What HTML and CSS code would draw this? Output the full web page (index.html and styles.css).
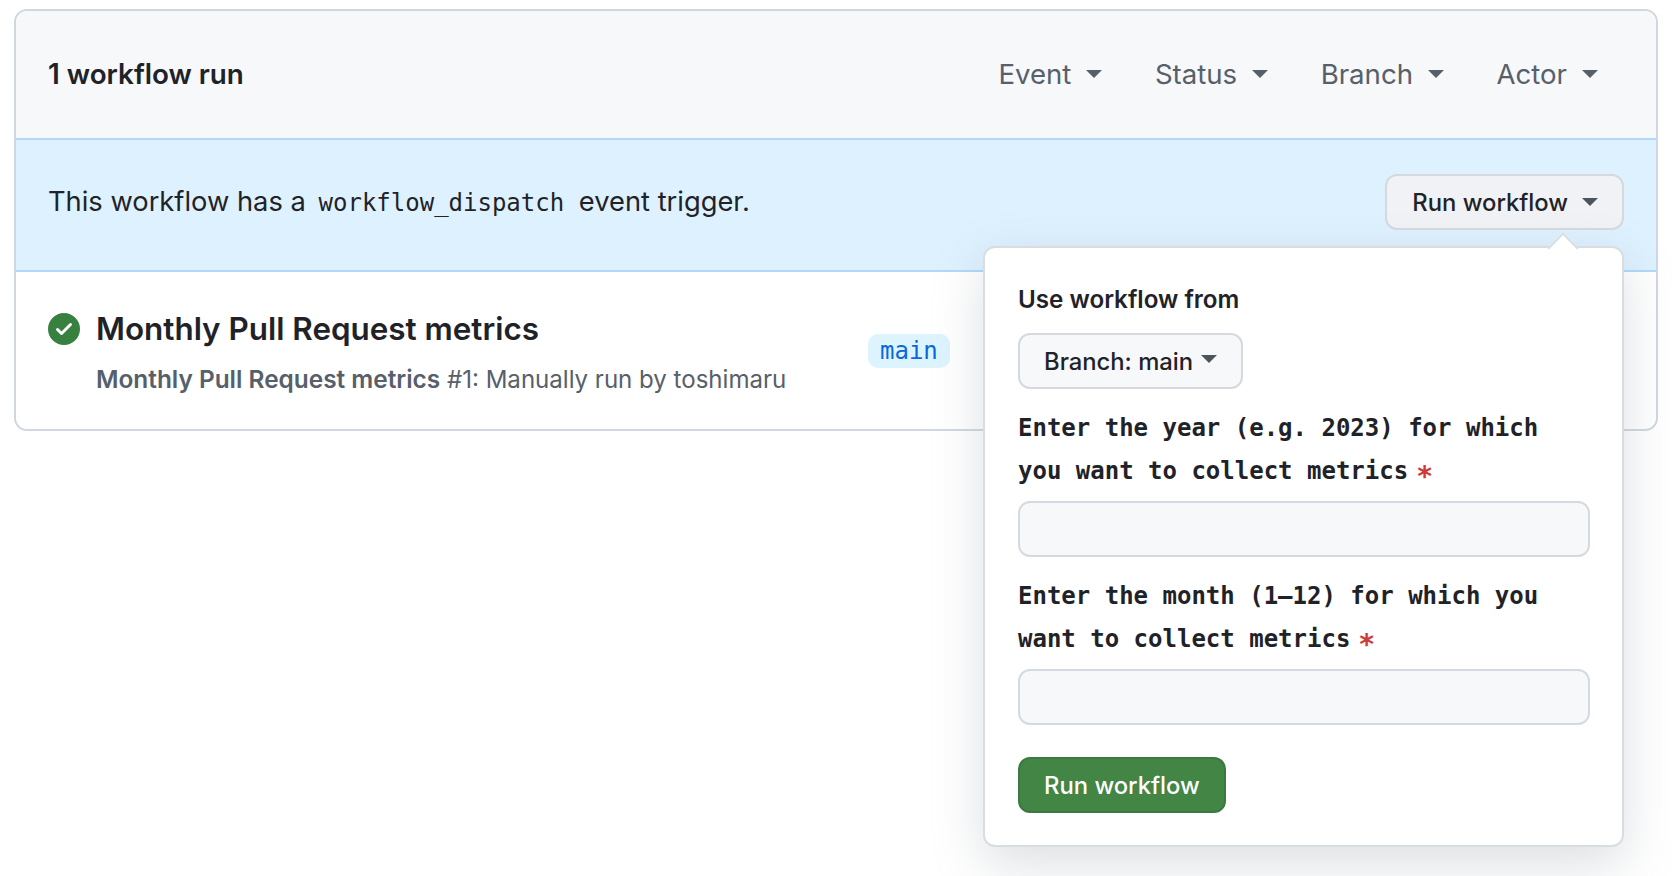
FILE: index.html
```html
<!DOCTYPE html>
<html lang="en">
<head>
    <meta charset="UTF-8">
    <title>Workflow runs</title>
    <link rel="stylesheet" href="styles.css">
</head>
<body>
    <div class="box">
        <div class="box-header">
            <h2 class="run-count">1 workflow run</h2>
            <div class="filters">
                <span class="filter">Event <i class="caret"></i></span>
                <span class="filter">Status <i class="caret"></i></span>
                <span class="filter">Branch <i class="caret"></i></span>
                <span class="filter">Actor <i class="caret"></i></span>
            </div>
        </div>
        <div class="banner">
            <p class="banner-text">This workflow has a <code class="code">workflow_dispatch</code> event trigger.</p>
            <div class="run-menu">
                <button class="btn btn-run">Run workflow <i class="caret caret-dark"></i></button>
                <div class="popover">
                    <div class="field-title">Use workflow from</div>
                    <button class="btn btn-branch">Branch: main <i class="caret caret-dark caret-up"></i></button>
                    <label class="field-label" for="year">Enter the year (e.g. 2023) for which you want to collect metrics<span class="required">*</span></label>
                    <input class="input" id="year" type="text">
                    <label class="field-label" for="month">Enter the month (1–12) for which you want to collect metrics<span class="required">*</span></label>
                    <input class="input" id="month" type="text">
                    <button class="btn btn-green">Run workflow</button>
                </div>
            </div>
        </div>
        <div class="run-row">
            <svg class="status-icon" viewBox="0 0 16 16" width="32" height="32">
                <path fill="#37803f" d="M8 16A8 8 0 1 1 8 0a8 8 0 0 1 0 16Zm3.78-9.72a.751.751 0 0 0-.018-1.042.751.751 0 0 0-1.042-.018L6.75 9.19 5.28 7.72a.751.751 0 0 0-1.042.018.751.751 0 0 0-.018 1.042l2 2a.75.75 0 0 0 1.06 0Z"></path>
            </svg>
            <div class="run-info">
                <div class="run-title">Monthly Pull Request metrics</div>
                <div class="run-meta"><strong>Monthly Pull Request metrics</strong> #1: Manually run by toshimaru</div>
            </div>
            <span class="branch-tag">main</span>
        </div>
    </div>
</body>
</html>
```

FILE: styles.css
```css
html {
    height: 100%;
}
body {
    box-sizing: border-box;
    min-height: 100%;
    margin: 0;
    padding: 9px 14px 0 14px;
    background-color: #fff;
    color: #1f2328;
    font-family: Inter, "Noto Sans", sans-serif;
    font-size: 27px;
}
.box {
    border: 2px solid #d0d7de;
    border-radius: 13px;
    background-color: #fff;
}
.box-header {
    display: flex;
    align-items: center;
    justify-content: space-between;
    height: 127px;
    padding: 0 58px 0 32px;
    background-color: #f6f8fa;
    border-radius: 12px 12px 0 0;
}
.run-count {
    margin: 0 0 2px;
    font-size: 27.8px;
    font-weight: 600;
}
.filters {
    display: flex;
    gap: 52.5px;
    margin-bottom: 2px;
}
.filter {
    display: flex;
    align-items: center;
    gap: 15px;
    color: #57606a;
    font-size: 27.6px;
}
.caret {
    display: inline-block;
    width: 0;
    height: 0;
    border-style: solid;
    border-width: 8px 8px 0;
    border-color: #57606a transparent transparent;
}
.caret-dark {
    border-top-color: #4c545c;
}
.caret-up {
    position: relative;
    top: -2px;
}
.banner {
    display: flex;
    align-items: center;
    justify-content: space-between;
    box-sizing: content-box;
    height: 122px;
    padding: 0 32px 8px 32px;
    background-color: #def1ff;
    border-top: 2px solid #b1d8f9;
    border-bottom: 2px solid #b1d8f9;
}
.banner-text {
    margin: 0;
    font-size: 27.3px;
}
.code {
    padding: 0 7px 0 5px;
    font-family: "DejaVu Sans Mono", monospace;
    font-size: 24px;
}
.run-menu {
    position: relative;
    margin-top: 2px;
}
.btn {
    display: inline-flex;
    align-items: center;
    gap: 14px;
    height: 56px;
    padding: 0 24px;
    border: 2px solid #d5d9de;
    border-radius: 12px;
    background-color: #f0f2f5;
    color: #1f2328;
    font-family: inherit;
    font-size: 23.8px;
    font-weight: 500;
    white-space: nowrap;
}
.btn-run {
    padding-left: 25px;
}
.popover {
    position: absolute;
    top: 72px;
    right: 0;
    box-sizing: border-box;
    width: 641px;
    height: 601px;
    padding: 34px 32px 0 33px;
    border: 2px solid #d8dde2;
    border-radius: 12px;
    background-color: #fff;
    box-shadow: 0 17px 50px rgba(140, 149, 159, 0.3);
}
.popover::before {
    content: "";
    position: absolute;
    top: -11px;
    right: 48px;
    width: 20px;
    height: 20px;
    background-color: #fff;
    border-top: 2px solid #d8dde2;
    border-left: 2px solid #d8dde2;
    transform: rotate(45deg);
}
.field-title {
    margin-bottom: 15px;
    font-size: 24.2px;
    font-weight: 600;
    line-height: 36px;
}
.btn-branch {
    gap: 8px;
    width: 225px;
    background-color: #f6f8fa;
}
.field-label {
    display: block;
    margin-top: 18px;
    font-family: "DejaVu Sans Mono", monospace;
    font-size: 24px;
    font-weight: 700;
    line-height: 42.5px;
}
.required {
    margin-left: 8px;
    color: #cf3a3a;
    font-size: 28px;
    line-height: 1;
    vertical-align: -7px;
}
.input {
    display: block;
    box-sizing: border-box;
    width: 100%;
    height: 56px;
    margin: 9px 0 0;
    border: 2px solid #d5dae0;
    border-radius: 12px;
    background-color: #f6f8fa;
}
.btn-green {
    display: flex;
    width: 208px;
    margin-top: 32px;
    border-color: #3a7a42;
    background-color: #428545;
    color: #fff;
}
.run-row {
    display: flex;
    align-items: flex-start;
    height: 157px;
    padding: 0 32px;
    border-radius: 0 0 12px 12px;
}
.status-icon {
    flex-shrink: 0;
    margin-top: 41px;
}
.run-info {
    width: 772px;
    margin-left: 16px;
    padding-top: 35px;
}
.run-title {
    font-size: 31.4px;
    font-weight: 600;
    line-height: 44px;
}
.run-meta {
    margin-top: 10px;
    color: #57606a;
    font-size: 24.05px;
    line-height: 36px;
}
.run-meta strong {
    font-size: 24.4px;
    font-weight: 600;
}
.branch-tag {
    margin-top: 62px;
    padding: 0 12px;
    border-radius: 10px;
    background-color: #ddf4ff;
    color: #0969da;
    font-family: "DejaVu Sans Mono", monospace;
    font-size: 24px;
    line-height: 34px;
}
```
